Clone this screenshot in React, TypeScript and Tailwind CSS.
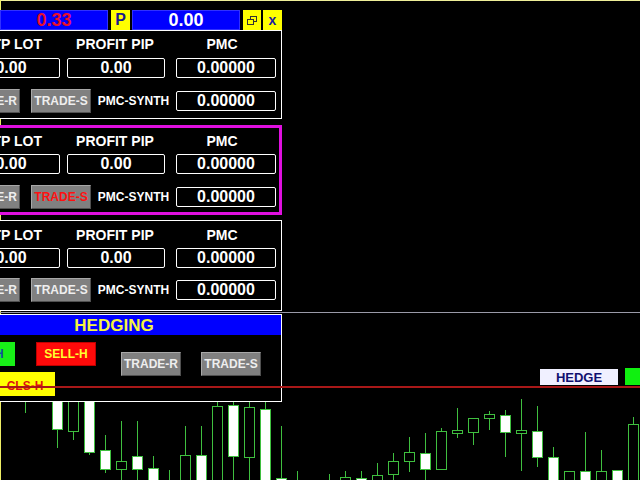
import React from 'react'

// cx, wickTop, bodyTop, bodyBottom, wickBottom, filled
const candles: [number, number, number, number, number, boolean][] = [
  [25, 370, 380, 400, 413, true],
  [57, 390, 395, 429, 448, true],
  [73, 390, 395, 431, 440, false],
  [89, 390, 395, 452, 455, true],
  [105, 435, 450, 469, 473, true],
  [121, 421, 461, 469, 490, false],
  [137, 421, 456, 469, 490, true],
  [153, 456, 468, 495, 500, true],
  [169, 470, 490, 500, 505, false],
  [185, 426, 455, 495, 500, false],
  [201, 426, 455, 495, 500, true],
  [217, 395, 406, 495, 500, false],
  [233, 395, 405, 456, 490, true],
  [249, 395, 407, 457, 490, false],
  [265, 395, 409, 495, 500, true],
  [281, 426, 478, 495, 500, true],
  [297, 471, 490, 500, 505, false],
  [329, 474, 490, 500, 505, false],
  [345, 471, 477, 495, 500, false],
  [361, 471, 478, 495, 500, true],
  [377, 463, 475, 495, 500, false],
  [393, 453, 461, 474, 490, false],
  [409, 437, 452, 461, 472, false],
  [425, 433, 453, 469, 490, true],
  [441, 428, 431, 469, 469, false],
  [457, 408, 430, 433, 438, false],
  [473, 418, 418, 432, 445, false],
  [489, 411, 414, 418, 430, false],
  [505, 410, 415, 432, 457, true],
  [521, 399, 430, 433, 471, false],
  [537, 406, 431, 457, 467, true],
  [553, 447, 457, 495, 500, true],
  [569, 471, 471, 495, 500, false],
  [585, 432, 471, 495, 500, true],
  [601, 450, 471, 495, 500, false],
  [617, 470, 470, 495, 500, true],
  [633, 417, 424, 495, 500, false],
]

function Chart() {
  return (
    <svg className="absolute inset-0" width="640" height="480" viewBox="0 0 640 480">
      <rect x="0" y="0" width="640" height="480" fill="#000" />
      <line x1="0" y1="0.5" x2="640" y2="0.5" stroke="#eeee99" strokeWidth="1" />
      <line x1="0.5" y1="0" x2="0.5" y2="480" stroke="#eeee66" strokeWidth="1" />
      <line x1="0" y1="312.5" x2="640" y2="312.5" stroke="#9a9aa8" strokeWidth="1" />
      {candles.map(([cx, wt, bt, bb, wb, filled]) => (
        <g key={cx} stroke="#3fbf3f" strokeWidth="1">
          <line x1={cx + 0.5} y1={wt} x2={cx + 0.5} y2={wb} />
          <rect
            x={cx - 4.5}
            y={bt + 0.5}
            width={10}
            height={Math.max(bb - bt, 1)}
            fill={filled ? '#ffffff' : '#000000'}
          />
        </g>
      ))}
    </svg>
  )
}

function Btn({ label, red }: { label: string; red?: boolean }) {
  return (
    <div
      className={
        'w-[60px] h-[24px] flex items-center justify-center bg-[#808080] border border-t-[#a8a8a8] border-l-[#a8a8a8] border-b-[#505050] border-r-[#505050] text-[12px] font-bold leading-none ' +
        (red ? 'text-[#ff1010]' : 'text-[#eeeeee]')
      }
    >
      {label}
    </div>
  )
}

function Box({ value, w }: { value: string; w: string }) {
  return (
    <div
      className={
        w +
        ' h-[20px] border border-white rounded-[2px] flex items-center justify-center text-white text-[16px] font-bold leading-none'
      }
    >
      {value}
    </div>
  )
}

function TradePanel({
  frame,
  pad,
  boxMt,
  rowMt,
  red,
}: {
  frame: string
  pad: string
  boxMt: string
  rowMt: string
  red?: boolean
}) {
  return (
    <div className={frame + ' w-[328px] bg-black ' + pad}>
      <div className="flex text-white text-[14px] font-bold leading-[16px] whitespace-nowrap">
        <div className="w-[80px] text-right">TP LOT</div>
        <div className="w-[146px] text-center">PROFIT PIP</div>
        <div className="w-[68px] text-center">PMC</div>
      </div>
      <div className={'flex ' + boxMt}>
        <Box value="0.00" w="w-[98px]" />
        <div className="ml-[7px]">
          <Box value="0.00" w="w-[98px]" />
        </div>
        <div className="ml-[11px]">
          <Box value="0.00000" w="w-[100px]" />
        </div>
      </div>
      <div className={'flex items-center -ml-[2px] ' + rowMt}>
        <Btn label="TRADE-R" />
        <div className="ml-[11px]">
          <Btn label="TRADE-S" red={red} />
        </div>
        <div className="w-[85px] text-center text-white text-[12px] font-bold whitespace-nowrap">PMC-SYNTH</div>
        <Box value="0.00000" w="w-[100px]" />
      </div>
    </div>
  )
}

function TopBar() {
  return (
    <div className="ml-[46px] flex h-[20px] font-bold leading-none">
      <div className="w-[108px] bg-[#0000ff] border border-[#3030ff] flex items-center justify-center text-[18px] text-[#e8102a]">
        0.33
      </div>
      <div className="ml-[3px] w-[19px] bg-[#ffff00] flex items-center justify-center text-[16px] text-[#1a1a8a]">
        P
      </div>
      <div className="ml-[2px] w-[108px] bg-[#0000ff] border border-[#3030ff] flex items-center justify-center text-[18px] text-white">
        0.00
      </div>
      <div className="ml-[3px] w-[18px] bg-[#ffff00] flex items-center justify-center">
        <svg width="10" height="9" viewBox="0 0 10 9" fill="none" stroke="#333" strokeWidth="1">
          <rect x="3.5" y="0.5" width="6" height="5" />
          <rect x="0.5" y="3.5" width="6" height="5" fill="#ffff00" />
        </svg>
      </div>
      <div className="ml-[2px] w-[19px] bg-[#ffff00] flex items-center justify-center text-[14px] text-[#1a1aa0]">
        x
      </div>
    </div>
  )
}

function HedgingPanel() {
  return (
    <div className="mt-[3px] w-[328px] h-[88px] border border-white bg-black">
      <div className="h-[20px] bg-[#0000ff] flex items-center justify-center pr-[8px] text-[17px] font-bold text-[#f4f440] leading-none">
        HEDGING
      </div>
      <div className="flex mt-[7px] text-[12px] font-bold leading-none">
        <div className="flex flex-col w-[141px]">
          <div className="flex">
            <div className="w-[60px] h-[24px] bg-[#18f018] flex items-center justify-center text-[#1050a0]">BUY-H</div>
            <div className="ml-[21px] w-[60px] h-[24px] bg-[#ff0a0a] border border-[#c00000] flex items-center justify-center text-[#ffff30]">
              SELL-H
            </div>
          </div>
          <div className="mt-[6px] ml-[40px] w-[60px] h-[24px] bg-[#ffff00] flex items-center justify-center pt-[4px] text-[#e01010]">
            CLS-H
          </div>
        </div>
        <div className="flex ml-[25px] mt-[10px]">
          <Btn label="TRADE-R" />
          <div className="ml-[20px]">
            <Btn label="TRADE-S" />
          </div>
        </div>
      </div>
    </div>
  )
}

export default function App() {
  return (
    <div
      className="relative w-[640px] h-[480px] overflow-hidden bg-black"
      style={{ fontFamily: '"Liberation Sans", Arial, sans-serif' }}
    >
      <Chart />

      <div className="absolute left-[-46px] top-[10px] w-[328px] flex flex-col">
        <TopBar />
        <TradePanel frame="h-[89px] border border-white" pad="pl-[7px] pt-[5px]" boxMt="mt-[6px]" rowMt="mt-[11px]" />
        <div className="mt-[6px]">
          <TradePanel
            frame="h-[90px] border-[3px] border-[#e010e0]"
            pad="pl-[5px] pt-[5px]"
            boxMt="mt-[5px]"
            rowMt="mt-[11px]"
            red
          />
        </div>
        <div className="mt-[5px]">
          <TradePanel frame="h-[91px] border border-white" pad="pl-[7px] pt-[6px]" boxMt="mt-[5px]" rowMt="mt-[10px]" />
        </div>
        <HedgingPanel />
      </div>

      <div className="absolute left-[540px] top-[369px] w-[78px] h-[16px] bg-[#f0f0ff] flex items-center justify-center text-[13px] font-bold text-[#101070] leading-none">
        HEDGE
      </div>
      <div className="absolute left-[625px] top-[368px] w-[16px] h-[17px] bg-[#10f010]" />

      <div className="absolute left-0 top-[386px] w-[640px] h-[2px] bg-[#a81818]" />
    </div>
  )
}
